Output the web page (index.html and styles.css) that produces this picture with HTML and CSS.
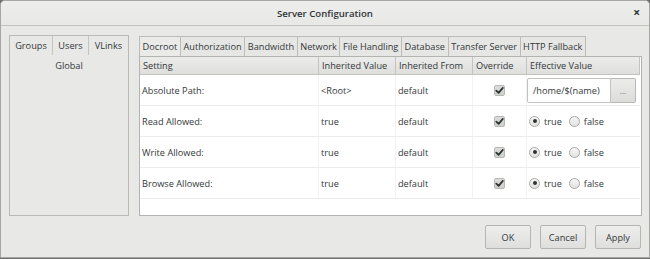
FILE: index.html
```html
<!DOCTYPE html>
<html>
<head>
<meta charset="utf-8">
<link rel="stylesheet" href="styles.css">
</head>
<body>
<div class="window">
  <div class="titlebar">
    <span></span>
    <span class="title">Server Configuration</span>
    <span class="close">×</span>
  </div>
  <div class="content">
    <div class="main">
      <div class="left">
        <div class="ltabs">
          <div class="ltab groups">Groups</div>
          <div class="ltab users">Users</div>
          <div class="ltab vlinks">VLinks</div>
        </div>
        <div class="litem">Global</div>
      </div>
      <div class="right">
        <div class="tabs">
          <div class="tab active">Docroot</div>
          <div class="tab">Authorization</div>
          <div class="tab">Bandwidth</div>
          <div class="tab">Network</div>
          <div class="tab">File Handling</div>
          <div class="tab">Database</div>
          <div class="tab">Transfer Server</div>
          <div class="tab">HTTP Fallback</div>
        </div>
        <div class="frame">
          <div class="grid">
            <div class="th">Setting</div>
            <div class="th">Inherited Value</div>
            <div class="th">Inherited From</div>
            <div class="th">Override</div>
            <div class="th last">Effective Value</div>

            <div class="td">Absolute Path:</div>
            <div class="td">&lt;Root&gt;</div>
            <div class="td">default</div>
            <div class="td center"><span class="check"><svg viewBox="0 0 11 11" width="11" height="11"><path d="M2.3 5.6 L4.6 7.8 L8.8 2.9" fill="none" stroke="#2e3436" stroke-width="1.8" stroke-linecap="round" stroke-linejoin="round"/></svg></span></div>
            <div class="td last eff"><span class="field">/home/$(name)</span><span class="dots">...</span></div>

            <div class="td">Read Allowed:</div>
            <div class="td">true</div>
            <div class="td">default</div>
            <div class="td center"><span class="check"><svg viewBox="0 0 11 11" width="11" height="11"><path d="M2.3 5.6 L4.6 7.8 L8.8 2.9" fill="none" stroke="#2e3436" stroke-width="1.8" stroke-linecap="round" stroke-linejoin="round"/></svg></span></div>
            <div class="td last radios"><span class="radio on"></span><span class="rlabel">true</span><span class="radio"></span><span class="rlabel">false</span></div>

            <div class="td">Write Allowed:</div>
            <div class="td">true</div>
            <div class="td">default</div>
            <div class="td center"><span class="check"><svg viewBox="0 0 11 11" width="11" height="11"><path d="M2.3 5.6 L4.6 7.8 L8.8 2.9" fill="none" stroke="#2e3436" stroke-width="1.8" stroke-linecap="round" stroke-linejoin="round"/></svg></span></div>
            <div class="td last radios"><span class="radio on"></span><span class="rlabel">true</span><span class="radio"></span><span class="rlabel">false</span></div>

            <div class="td">Browse Allowed:</div>
            <div class="td">true</div>
            <div class="td">default</div>
            <div class="td center"><span class="check"><svg viewBox="0 0 11 11" width="11" height="11"><path d="M2.3 5.6 L4.6 7.8 L8.8 2.9" fill="none" stroke="#2e3436" stroke-width="1.8" stroke-linecap="round" stroke-linejoin="round"/></svg></span></div>
            <div class="td last radios"><span class="radio on"></span><span class="rlabel">true</span><span class="radio"></span><span class="rlabel">false</span></div>
          </div>
        </div>
      </div>
    </div>
    <div class="actions">
      <div class="btn">OK</div>
      <div class="btn">Cancel</div>
      <div class="btn">Apply</div>
    </div>
  </div>
</div>
</body>
</html>
```

FILE: styles.css
```css
* { box-sizing: border-box; }
html, body {
  margin: 0;
  padding: 0;
  width: 650px;
  height: 259px;
  overflow: hidden;
  background: #6f6f6f;
}
body {
  font-family: "Open Sans", "Noto Sans", sans-serif;
  font-size: 9.2px;
  color: #33383a;
}
.window {
  width: 650px;
  height: 258px;
  background: #e8e8e7;
  border: 1px solid #a6a6a3;
  border-radius: 5px 5px 0 0;
  display: flex;
  flex-direction: column;
}
.titlebar {
  height: 25px;
  flex: none;
  display: grid;
  grid-template-columns: 1fr auto 1fr;
  align-items: center;
  background: linear-gradient(#ededec, #e8e8e7);
  border-bottom: 1px solid #c2c2bf;
  border-radius: 4px 4px 0 0;
}
.title {
  font-weight: 600;
  font-size: 9.6px;
  color: #2e3436;
}
.close {
  justify-self: end;
  margin-right: 9px;
  font-weight: bold;
  font-size: 12px;
  line-height: 12px;
  color: #2e3436;
}
.content {
  flex: 1;
  display: flex;
  flex-direction: column;
  padding: 9px 7px 7px 8px;
}
.main {
  display: flex;
  gap: 10px;
  height: 181px;
}
.left {
  width: 120px;
  flex: none;
  border: 1px solid #b9b9b6;
  background: #e8e8e7;
}
.ltabs {
  display: flex;
  height: 19px;
}
.ltab {
  display: flex;
  align-items: center;
  justify-content: center;
  border-right: 1px solid #c4c4c1;
}
.groups { width: 43px; }
.users { width: 36px; }
.vlinks { flex: 1; border-right: none; }
.litem {
  height: 20px;
  display: flex;
  align-items: center;
  justify-content: center;
}
.right {
  flex: 1;
  display: flex;
  flex-direction: column;
  margin-top: 1px;
}
.tabs {
  display: flex;
  height: 20px;
  flex: none;
}
.tab {
  padding: 0 2.6px;
  border: 1px solid #bcbcb9;
  border-bottom: none;
  margin-right: -1px;
  display: flex;
  align-items: center;
  background: #e6e6e4;
  white-space: nowrap;
}
.tab.active {
  background: #eaeae9;
}
.frame {
  flex: 1;
  border: 1px solid #b3b3b0;
  background: #ffffff;
}
.grid {
  display: grid;
  grid-template-columns: 179px 77px 77px 54px 113px;
  grid-template-rows: 18px 31px 31px 31px 31px;
}
.th {
  background: linear-gradient(#ececeb, #dededc);
  border-right: 1px solid #c3c3c0;
  border-bottom: 1px solid #c3c3c0;
  display: flex;
  align-items: center;
  padding-left: 3px;
  white-space: nowrap;
}
.td {
  display: flex;
  align-items: center;
  padding-left: 2px;
  border-right: 1px solid #f2f2f1;
  border-bottom: 1px solid #ececeb;
  white-space: nowrap;
}
.td.last { border-right: none; }
.td.center { justify-content: center; padding-left: 0; }
.check {
  width: 11px;
  height: 11px;
  border: 1px solid #b7b7b4;
  border-radius: 2px;
  background: linear-gradient(#dcdcda, #cfcfcc);
  display: flex;
  align-items: center;
  justify-content: center;
}
.check svg { display: block; flex: none; }
.eff { padding-left: 0; padding-top: 1px; }
.field {
  width: 84px;
  height: 25px;
  border: 1px solid #c2c2bf;
  border-radius: 2px 0 0 2px;
  background: #fff;
  display: flex;
  align-items: center;
  padding-left: 5px;
}
.dots {
  width: 25px;
  height: 25px;
  border: 1px solid #b8b8b5;
  border-left: none;
  border-radius: 0 2px 2px 0;
  background: linear-gradient(#ececeb, #dcdcda);
  display: flex;
  align-items: center;
  justify-content: center;
  color: #6a6e70;
  font-size: 8px;
}
.radios { padding-left: 2px; }
.radio {
  width: 11px;
  height: 11px;
  border-radius: 50%;
  border: 1px solid #a9a9a6;
  background: linear-gradient(#f6f6f5, #e2e2e0);
  display: flex;
  align-items: center;
  justify-content: center;
  flex: none;
}
.radio.on::after {
  content: "";
  width: 4px;
  height: 4px;
  border-radius: 50%;
  background: #2e3436;
}
.rlabel { margin: 0 7px 0 4px; }
.actions {
  display: flex;
  justify-content: flex-end;
  gap: 9px;
  margin-top: 9px;
  padding-right: 1px;
}
.btn {
  height: 24px;
  min-width: 46px;
  padding: 0 6px;
  border: 1px solid #b5b5b2;
  border-radius: 2px;
  background: linear-gradient(#eeeeed, #dededc);
  display: flex;
  align-items: center;
  justify-content: center;
}
```
